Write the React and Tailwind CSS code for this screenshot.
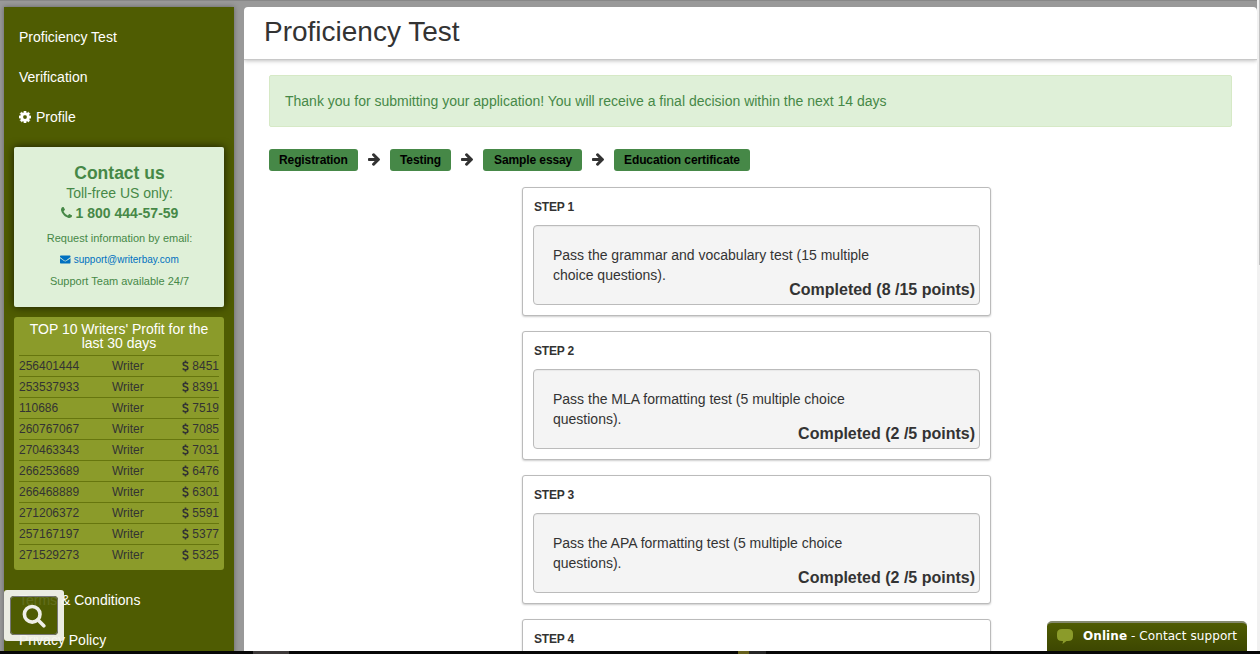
import { FaEnvelope } from "react-icons/fa";

const writers = [
  ["256401444", "8451"],
  ["253537933", "8391"],
  ["110686", "7519"],
  ["260767067", "7085"],
  ["270463343", "7031"],
  ["266253689", "6476"],
  ["266468889", "6301"],
  ["271206372", "5591"],
  ["257167197", "5377"],
  ["271529273", "5325"],
];

const steps = [
  { title: "STEP 1", text: "Pass the grammar and vocabulary test (15 multiple choice questions).", result: "Completed (8 /15 points)" },
  { title: "STEP 2", text: "Pass the MLA formatting test (5 multiple choice questions).", result: "Completed (2 /5 points)" },
  { title: "STEP 3", text: "Pass the APA formatting test (5 multiple choice questions).", result: "Completed (2 /5 points)" },
  { title: "STEP 4", text: "", result: "" },
];

const stages = [
  ["Registration", "w-[89px] pl-[10px]"],
  ["Testing", "w-[61px] pl-[10px]"],
  ["Sample essay", "w-[99px] pl-[11px]"],
  ["Education certificate", "w-[136px] pl-[10px]"],
];

function CogIcon() {
  return (
    <svg viewBox="128 128 1536 1536" className="mr-[5px] h-3 w-3 fill-current stroke-current [stroke-width:40]">
      <path d="M1152 896q0-106-75-181t-181-75-181 75-75 181 75 181 181 75 181-75 75-181zm512-109v222q0 12-8 23t-20 13l-185 28q-19 54-39 91 35 50 107 138 10 12 10 25t-9 23q-27 37-99 108t-94 71q-12 0-26-9l-138-108q-44 23-91 38-16 136-29 186-7 28-36 28h-222q-14 0-24.5-8.5t-11.5-21.5l-28-184q-49-16-90-37l-141 107q-10 9-25 9-14 0-25-11-126-114-165-168-7-10-7-23 0-12 8-23 15-21 51-66.5t54-70.5q-27-50-41-99l-183-27q-13-2-21-12.5t-8-23.5v-222q0-12 8-23t19-13l186-28q14-46 39-92-40-57-107-138-10-12-10-24 0-10 9-23 26-36 98.5-107.5t94.5-71.5q13 0 26 10l138 107q44-23 91-38 16-136 29-186 7-28 36-28h222q14 0 24.5 8.5t11.5 21.5l28 184q49 16 90 37l142-107q9-9 24-9 13 0 25 10 129 119 165 170 7 8 7 22 0 12-8 23-15 21-51 66.5t-54 70.5q26 50 41 98l183 28q13 2 21 12.5t8 23.5z" />
    </svg>
  );
}

function PhoneIcon() {
  return (
    <svg viewBox="0 128 1408 1408" className="mr-1 mb-px h-[11px] w-[11px] fill-current">
      <path d="M1408 1240q0 27-10 70.5t-21 68.5q-21 50-122 106-94 51-186 51-27 0-53-3.5t-57.5-12.5-47-14.5-55.5-20.5-49-18q-98-35-175-83-127-79-264-216t-216-264q-48-77-83-175-3-9-18-49t-20.5-55.5-14.5-47-12.5-57.5-3.5-53q0-92 51-186 56-101 106-122 25-11 68.5-21t70.5-10q14 0 21 3 18 6 53 76 11 19 30 54t35 63.5 31 53.5q3 4 17.5 25t21.5 35.5 7 28.5q0 20-28.5 50t-62 55-62 53-28.5 46q0 9 5 22.5t8.5 20.5 14 24 11.5 19q76 137 174 235t235 174q2 1 19 11.5t24 14 20.5 8.5 22.5 5q18 0 46-28.5t53-62 55-62 50-28.5q14 0 28.5 7t35.5 21.5 25 17.5q25 15 53.5 31t63.5 35 54 30q70 35 76 53 3 7 3 21z" />
    </svg>
  );
}

function ArrowIcon() {
  return (
    <svg viewBox="0 -64 1472 1600" className="mx-[10px] mb-[2px] h-[13px] w-3 fill-[#333]">
      <path d="M1472 736q0 54-37 91l-651 651q-39 37-91 37-51 0-90-37l-75-75q-38-38-38-91t38-91l293-293H117q-52 0-84.5-37.5T0 800V672q0-53 32.5-90.5T117 544h704L528 250q-38-36-38-90t38-90l75-75q38-38 90-38 53 0 91 38l651 651q37 35 37 90z" />
    </svg>
  );
}

function DollarIcon() {
  return (
    <svg viewBox="0 0 7 12" className="mr-[3px] mb-px h-3 w-[7px] fill-none stroke-[#333] [stroke-width:1.6]">
      <path d="M6 3.4Q5 2.3 3.5 2.3 1.2 2.3 1.2 3.9 1.2 5.2 3.5 5.8 5.9 6.4 5.9 8 5.9 9.7 3.5 9.7 1.8 9.7.7 8.4M3.5.4v2M3.5 9.5v2.1" />
    </svg>
  );
}

function SearchIcon() {
  return (
    <svg viewBox="0 0 24 24" className="h-6 w-6 fill-none stroke-[#efefe8] [stroke-width:3.6]">
      <circle cx="10.2" cy="10.3" r="7.8" />
      <path d="M15.8 15.8l6 6" strokeLinecap="round" />
    </svg>
  );
}

function Sidebar() {
  return (
    <aside className="h-[647px] w-[230px] shrink-0 bg-[#4f5c02] px-[10px] pt-[10px] text-white shadow-[0_0_5px_rgba(0,0,0,0.35)]">
      <nav className="pl-[5px] text-sm">
        <div className="flex h-10 items-center">Proficiency Test</div>
        <div className="flex h-10 items-center">Verification</div>
        <div className="flex h-10 items-center"><CogIcon />Profile</div>
      </nav>
      <section className="mt-[10px] flex h-40 flex-col items-center rounded-[2px] bg-[#dff0d8] pt-4 pl-px text-[#468847] shadow-[0_0_8px_rgba(0,0,0,0.7)]">
        <h2 className="text-[17.5px] leading-5 font-bold">Contact us</h2>
        <div className="text-sm leading-5">Toll-free US only:</div>
        <div className="flex items-center text-sm leading-5 font-bold"><PhoneIcon />1 800 444-57-59</div>
        <div className="mt-[5px] text-[11px] leading-5">Request information by email:</div>
        <div className="mt-[2px] flex items-center text-[10px] leading-5 text-[#0070c0]"><FaEnvelope className="mr-[3px] mb-px h-[11px] w-[10.5px]" />support@writerbay.com</div>
        <div className="mt-[1px] text-[11px] leading-5">Support Team available 24/7</div>
      </section>
      <section className="mt-[10px] h-[253px] rounded-[3px] bg-[#8b9b2a] px-[5px] pt-[5px]">
        <h3 className="mb-[5px] text-center text-sm leading-[14px]">TOP 10 Writers' Profit for the last 30 days</h3>
        {writers.map(([id, sum]) => (
          <div key={id} className="flex h-[21px] items-center border-t border-[#66760e] text-xs text-[#333]">
            <span className="w-[93px]">{id}</span>
            <span className="flex-1">Writer</span>
            <DollarIcon />
            <span>{sum}</span>
          </div>
        ))}
      </section>
      <nav className="pt-[10px] pl-[5px] text-sm">
        <div className="flex h-10 items-center">Terms &amp; Conditions</div>
        <div className="flex h-10 items-center">Privacy Policy</div>
      </nav>
    </aside>
  );
}

function Step({ title, text, result }) {
  return (
    <section className="h-[129px] w-[469px] shrink-0 rounded-[3px] border border-[#bbb] bg-white px-[10px] shadow-[0_1px_2px_rgba(0,0,0,0.2)]">
      <h3 className="h-[37px] pt-[9px] pl-px text-xs leading-5 font-bold tracking-[-0.2px] text-[#333]">{title}</h3>
      <div className="h-20 rounded-[4px] border border-[#bbb] bg-[#f4f4f4] pt-[19px] pr-1 pl-[19px] text-[#333] shadow-[inset_0_1px_1px_rgba(0,0,0,0.05)]">
        <p className="w-[345px] text-sm leading-5">{text}</p>
        <p className="-mt-[5px] text-right text-base leading-5 font-bold">{result}</p>
      </div>
    </section>
  );
}

export default function App() {
  return (
    <div className="relative flex h-[654px] w-[1260px] flex-col overflow-hidden bg-[#999] font-['Liberation_Sans',Arial,sans-serif] text-[#333]">
      <div className="flex h-[651px] shrink-0 overflow-hidden">
        <div className="flex flex-1 border-t border-[#888] pt-[6px] pl-1">
          <Sidebar />
          <main className="ml-[10px] h-[647px] flex-1 overflow-hidden rounded-t-[4px] bg-white">
            <h1 className="h-[53px] border-b border-[#c8c8c8] pt-[5px] pl-5 text-[28px] leading-10 shadow-[0_1px_4px_rgba(0,0,0,0.25)]">Proficiency Test</h1>
            <div className="pt-[15px] pr-[25px] pl-[25px]">
              <div className="flex h-[52px] items-center rounded-[2px] border border-[#d6e9c6] bg-[#dff0d8] pl-[15px] text-sm text-[#468847]">
                Thank you for submitting your application! You will receive a final decision within the next 14 days
              </div>
              <div className="mt-[22px] flex h-[22px] items-center">
                {stages.map(([name, box], i) => (
                  <div key={name} className="flex items-center">
                    {i > 0 && <ArrowIcon />}
                    <div className={`${box} flex h-[22px] items-center rounded-[3px] bg-[#468847] text-xs font-bold tracking-[-0.1px] whitespace-nowrap text-black`}>{name}</div>
                  </div>
                ))}
              </div>
              <div className="mt-4 ml-[253px] flex flex-col gap-[15px]">
                {steps.map((step) => <Step key={step.title} {...step} />)}
              </div>
            </div>
          </main>
        </div>
        <div className="w-[3px] bg-[#f1f1f1] pl-[2px]">
          <div className="h-[265px] bg-[#c1c1c1]" />
        </div>
      </div>
      <div className="flex h-[3px] bg-[#070707]">
        <div className="ml-[253px] w-9 bg-[#3d3939]" />
        <div className="ml-[449px] w-[11px] bg-[#66601b]" />
        <div className="w-[17px] bg-[#262626]" />
      </div>
      <div className="absolute top-[590px] left-1 h-[51px] w-[60px] overflow-hidden rounded-[3px] p-[6px]">
        <div className="flex h-full items-center justify-center rounded-[4px] border border-[#777] bg-[#4f5c02]/90 pt-[1px] shadow-[0_0_0_12px_rgba(243,243,238,0.95)]">
          <SearchIcon />
        </div>
      </div>
      <div className="absolute top-[621px] left-[1047px] flex h-[30px] w-[200px] items-center rounded-t-[5px] border-t-2 border-[#858a70] bg-linear-to-b from-[#4f5c02] to-[#3d4702] pb-[2px] pl-[10px] font-['DejaVu_Sans',Verdana,sans-serif] text-xs tracking-[0.08px] text-white">
        <svg viewBox="0 0 16 16" className="mr-[10px] h-4 w-4 fill-[#8b9b2a]">
          <path d="M5 1h6q5 0 5 4.5v3Q16 13 11 13H9.5L5.5 16l.5-3H5Q0 13 0 8.5v-3Q0 1 5 1z" />
        </svg>
        <span className="whitespace-pre"><b>Online</b> - Contact support</span>
      </div>
    </div>
  );
}
